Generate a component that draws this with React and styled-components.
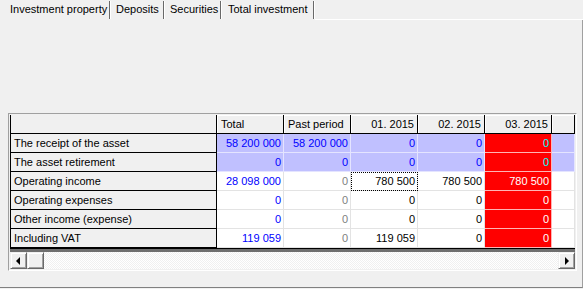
import styled, { createGlobalStyle } from "styled-components";

const GlobalStyle = createGlobalStyle`
  html, body {
    margin: 0;
    padding: 0;
    background: #f0f0f0;
  }

  body {
    font-family: "Liberation Sans", Arial, sans-serif;
    font-size: 11px;
    color: #000;
  }
`;

const Window = styled.div`
  width: 583px;
  height: 289px;
  overflow: hidden;
`;

const TabStrip = styled.div`
  display: flex;
  align-items: flex-start;
  height: 20px;
`;

const Tab = styled.div`
  box-sizing: border-box;
  flex-shrink: 0;
  width: ${(props) => props.$width}px;
  height: 18px;
  margin-top: 1px;
  padding-left: ${(props) => props.$pad}px;
  line-height: 17px;
  white-space: nowrap;
  border-right: 1px solid #696969;
  box-shadow: 1px 0 0 #fff;
`;

const TabFiller = styled.div`
  flex: 1;
  align-self: stretch;
  box-sizing: border-box;
  margin-left: 1px;
  border-bottom: 1px solid #fff;
`;

const Panel = styled.div`
  box-sizing: border-box;
  height: 268px;
  padding: 93px 0 0 8px;
  border-right: 1px solid #a0a0a0;
  border-bottom: 1px solid #808080;
`;

const GridFrame = styled.div`
  box-sizing: border-box;
  width: 569px;
  padding: 1px;
  border: 1px solid;
  border-color: #a0a0a0 #fff #fff #a0a0a0;
  background: #f0f0f0;
`;

const GridBody = styled.div`
  width: 565px;
  overflow: hidden;
  background: #808080;
`;

const Row = styled.div`
  display: flex;
  height: 19px;
`;

const Cell = styled.div`
  box-sizing: border-box;
  flex-shrink: 0;
  width: ${(props) => props.$width || 67}px;
  height: 19px;
  line-height: 18px;
  white-space: nowrap;
  overflow: hidden;
  border-right: 1px solid;
  border-bottom: 1px solid;
`;

const LabelCell = styled(Cell)`
  width: 207px;
  padding-left: 3px;
  background: #f0f0f0;
  border-left: 1px solid #000;
  border-color: #000;
`;

const HeaderCell = styled(Cell)`
  padding: 0 3px 0 4px;
  text-align: ${(props) => props.$align || "left"};
  background: #f0f0f0;
  border-color: #000;
  box-shadow: inset 1px 1px 0 #fff;
`;

const tones = {
  plain: { bg: "#fff", line: "#e3e3e3" },
  plan: { bg: "#c0c0ff", line: "#e4e4ff" },
  alert: { bg: "#ff0000", line: "#ffb4b4" },
};

const DataCell = styled(Cell)`
  padding-right: 2px;
  text-align: right;
  color: ${(props) => props.$color};
  background: ${(props) => tones[props.$tone].bg};
  border-color: ${(props) => tones[props.$tone].line};
  outline: ${(props) => (props.$focused ? "1px dotted #000" : "none")};
  outline-offset: -1px;
`;

const Band = styled.div`
  box-sizing: border-box;
  height: 4px;
  border-top: 1px solid #000;
  background: #6f6f6f;
`;

const ScrollBar = styled.div`
  display: flex;
  height: 17px;
  background: repeating-conic-gradient(#fff 0 25%, #f0f0f0 0 50%) 0 0 / 2px 2px;
`;

const ScrollButton = styled.div`
  box-sizing: border-box;
  flex-shrink: 0;
  display: flex;
  align-items: center;
  justify-content: center;
  width: 17px;
  height: 17px;
  background: #f0f0f0;
  border: 1px solid;
  border-color: #f0f0f0 #696969 #696969 #f0f0f0;
  box-shadow: inset 1px 1px 0 #fff, inset -1px -1px 0 #a0a0a0;
`;

const Track = styled.div`
  flex: 1;
`;

const Arrow = styled.span`
  width: 0;
  height: 0;
  border-top: 4px solid transparent;
  border-bottom: 4px solid transparent;
  ${(props) =>
    props.$dir === "left"
      ? "border-right: 4px solid #000; margin-left: -1px;"
      : "border-left: 4px solid #000; margin-left: 1px;"}
`;

const tabs = [
  { name: "Investment property", width: 110, pad: 10 },
  { name: "Deposits", width: 54, pad: 6 },
  { name: "Securities", width: 57, pad: 6 },
  { name: "Total investment", width: 93, pad: 7 },
];

const columns = [
  { title: "Total", align: "left" },
  { title: "Past period", align: "left" },
  { title: "01. 2015", align: "right" },
  { title: "02. 2015", align: "right" },
  { title: "03. 2015", align: "right" },
  { title: "", align: "right", width: 23 },
];

const rows = [
  { label: "The receipt of the asset", plan: true, values: ["58 200 000", "58 200 000", "0", "0", "0", ""] },
  { label: "The asset retirement", plan: true, values: ["0", "0", "0", "0", "0", ""] },
  { label: "Operating income", values: ["28 098 000", "0", "780 500", "780 500", "780 500", ""], focus: 2 },
  { label: "Operating expenses", values: ["0", "0", "0", "0", "0", ""] },
  { label: "Other income (expense)", values: ["0", "0", "0", "0", "0", ""] },
  { label: "Including VAT", values: ["119 059", "0", "119 059", "0", "0", ""] },
];

const cellLook = (row, index) => {
  if (index === 4) {
    return { tone: "alert", color: row.plan ? "#00ffff" : "#fff" };
  }
  if (row.plan) return { tone: "plan", color: "#0000ff" };
  if (index === 0) return { tone: "plain", color: "#0000ff" };
  if (index === 1) return { tone: "plain", color: "#808080" };
  return { tone: "plain", color: "#000" };
};

const App = () => {
  return (
    <Window>
      <GlobalStyle />
      <TabStrip>
        {tabs.map((tab) => (
          <Tab key={tab.name} $width={tab.width} $pad={tab.pad}>
            {tab.name}
          </Tab>
        ))}
        <TabFiller />
      </TabStrip>

      <Panel>
        <GridFrame>
          <GridBody>
            <Row>
              <LabelCell />
              {columns.map((col, i) => (
                <HeaderCell key={i} $align={col.align} $width={col.width}>
                  {col.title}
                </HeaderCell>
              ))}
            </Row>
            {rows.map((row) => (
              <Row key={row.label}>
                <LabelCell>{row.label}</LabelCell>
                {row.values.map((value, i) => {
                  const look = cellLook(row, i);
                  return (
                    <DataCell
                      key={i}
                      $width={columns[i].width}
                      $tone={look.tone}
                      $color={look.color}
                      $focused={row.focus === i}
                    >
                      {value}
                    </DataCell>
                  );
                })}
              </Row>
            ))}
            <Band />
          </GridBody>
          <ScrollBar>
            <ScrollButton>
              <Arrow $dir="left" />
            </ScrollButton>
            <ScrollButton />
            <Track />
            <ScrollButton>
              <Arrow $dir="right" />
            </ScrollButton>
          </ScrollBar>
        </GridFrame>
      </Panel>
    </Window>
  );
};

export default App;
